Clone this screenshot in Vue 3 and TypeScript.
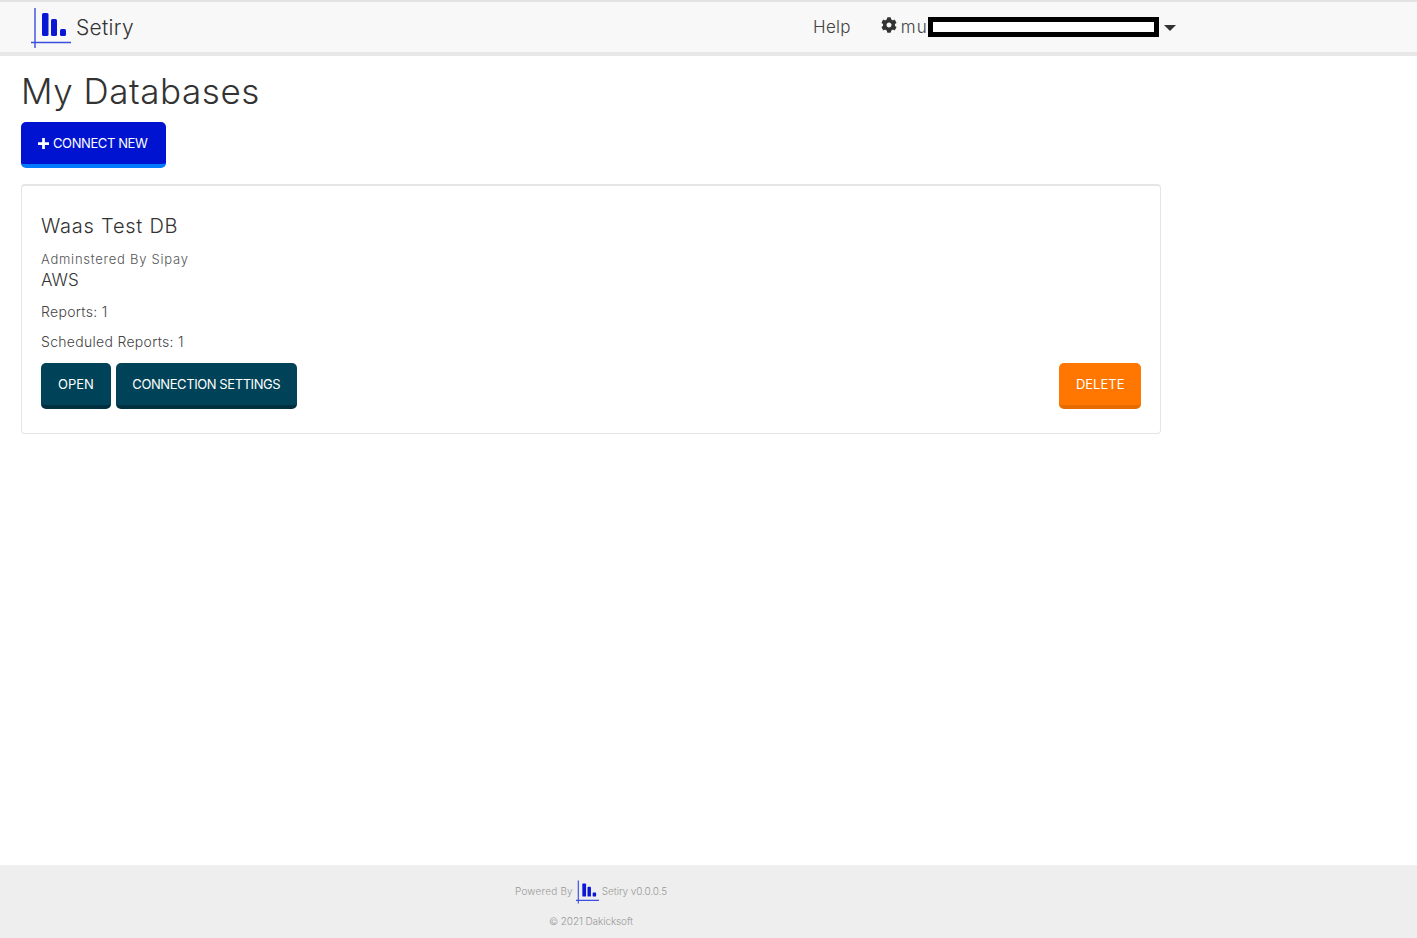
<template>
  <div class="page">
    <header class="navbar">
      <div class="brand">
        <svg class="logo" viewBox="0 0 40 40">
          <path d="M4 0v40M0 34.5h40" fill="none" stroke="#3a4fe0" stroke-width="1.4" />
          <rect x="11" y="5" width="6.5" height="23" rx="1.5" fill="#0a18d6" />
          <rect x="20" y="11" width="6" height="17" rx="1.5" fill="#0a18d6" />
          <rect x="29" y="21" width="6" height="7" rx="1.5" fill="#0a18d6" />
        </svg>
        <span class="brand-name">Setiry</span>
      </div>
      <a class="nav-link help">Help</a>
      <div class="user-menu">
        <svg class="gear" viewBox="0 0 512 512">
          <path
            d="M487.4 315.7l-42.6-24.6c4.3-23.2 4.3-47 0-70.2l42.6-24.6c4.9-2.8 7.1-8.6 5.5-14-11.1-35.6-30-67.8-54.7-94.6-3.8-4.1-10-5.1-14.8-2.3L380.8 110c-17.9-15.4-38.5-27.3-60.8-35.1V25.8c0-5.6-3.9-10.5-9.4-11.7-36.7-8.2-74.3-7.8-109.2 0-5.5 1.2-9.4 6.1-9.4 11.7V75c-22.2 7.9-42.8 19.8-60.8 35.1L88.7 85.5c-4.9-2.8-11-1.9-14.8 2.3-24.7 26.7-43.6 58.9-54.7 94.6-1.7 5.4.6 11.2 5.5 14L67.3 221c-4.3 23.2-4.3 47 0 70.2l-42.6 24.6c-4.9 2.8-7.1 8.6-5.5 14 11.1 35.6 30 67.8 54.7 94.6 3.8 4.1 10 5.1 14.8 2.3l42.6-24.6c17.9 15.4 38.5 27.3 60.8 35.1v49.2c0 5.6 3.9 10.5 9.4 11.7 36.7 8.2 74.3 7.8 109.2 0 5.5-1.2 9.4-6.1 9.4-11.7v-49.2c22.2-7.9 42.8-19.8 60.8-35.1l42.6 24.6c4.9 2.8 11 1.9 14.8-2.3 24.7-26.7 43.6-58.9 54.7-94.6 1.5-5.5-.7-11.3-5.6-14.1zM256 336c-44.1 0-80-35.9-80-80s35.9-80 80-80 80 35.9 80 80-35.9 80-80 80z"
          />
        </svg>
        <span class="nav-link user-name">mu</span>
        <span class="redacted"></span>
        <span class="caret"></span>
      </div>
    </header>

    <main class="content">
      <h1 class="title">My Databases</h1>
      <button class="btn btn-primary">
        <svg class="plus" viewBox="0 0 12 12"><path d="M4.5 0h3v4.5H12v3H7.5V12h-3V7.5H0v-3h4.5z" /></svg>
        CONNECT NEW
      </button>

      <section v-for="db in databases" :key="db.name" class="card">
        <h2 class="card-title">{{ db.name }}</h2>
        <div class="admin">Adminstered By {{ db.admin }}</div>
        <div class="provider">{{ db.provider }}</div>
        <p class="stat">Reports: {{ db.reports }}</p>
        <p class="stat">Scheduled Reports: {{ db.scheduled }}</p>
        <div class="actions">
          <button class="btn btn-dark btn-open">OPEN</button>
          <button class="btn btn-dark btn-settings">CONNECTION SETTINGS</button>
          <button class="btn btn-orange">DELETE</button>
        </div>
      </section>
    </main>

    <footer class="footer">
      <div class="powered">
        <span class="powered-by">Powered By</span>
        <svg class="logo-small" viewBox="0 0 40 40">
          <path d="M4 0v40M0 34.5h40" fill="none" stroke="#3a4fe0" stroke-width="2" />
          <rect x="11" y="5" width="6.5" height="23" rx="1.5" fill="#0a18d6" />
          <rect x="20" y="11" width="6" height="17" rx="1.5" fill="#0a18d6" />
          <rect x="29" y="21" width="6" height="7" rx="1.5" fill="#0a18d6" />
        </svg>
        <span class="version">Setiry v0.0.0.5</span>
      </div>
      <div class="copyright">© 2021 Dakicksoft</div>
    </footer>
  </div>
</template>

<script setup lang="ts">
const databases = [
  { name: 'Waas Test DB', admin: 'Sipay', provider: 'AWS', reports: 1, scheduled: 1 }
];
</script>

<style>
body {
  margin: 0;
  background: #fff;
}
</style>

<style scoped>
.page {
  display: flex;
  flex-direction: column;
  min-height: 938px;
  font-family: Inter, "Open Sans", sans-serif;
  font-weight: 300;
  color: #333;
}

.navbar {
  display: flex;
  align-items: center;
  box-sizing: border-box;
  height: 56px;
  padding-left: 31px;
  background: #f8f8f8;
  border-top: 2px solid #e2e2e2;
  border-bottom: 4px solid #e7e7e7;
}

.brand {
  display: flex;
  align-items: center;
  width: 782px;
}

.logo {
  width: 40px;
  height: 40px;
  margin: 1px 5px 0 0;
}

.brand-name {
  font-size: 21px;
  letter-spacing: 0.3px;
}

.nav-link {
  font-size: 17px;
  color: #444;
  letter-spacing: 0.3px;
}

.user-menu {
  display: flex;
  align-items: center;
  margin-left: 30px;
}

.gear {
  width: 16px;
  height: 16px;
  margin: -4px 4px 0 0;
  fill: #333;
}

.user-name {
  letter-spacing: 1px;
}

.redacted {
  box-sizing: border-box;
  width: 231px;
  height: 20px;
  margin-top: -1px;
  background: #fff;
  border: 5px solid #000;
}

.caret {
  width: 0;
  height: 0;
  margin: 2px 0 0 5px;
  border-top: 6px solid #333;
  border-left: 6px solid transparent;
  border-right: 6px solid transparent;
}

.content {
  flex: 1;
  width: 1140px;
  padding-left: 21px;
}

.title {
  margin: 13px 0 9px;
  font-size: 35px;
  line-height: 44px;
  font-weight: 300;
  letter-spacing: 0.55px;
}

.btn {
  box-sizing: border-box;
  height: 46px;
  padding: 0 17px;
  border: none;
  border-bottom: 4px solid;
  border-radius: 5px;
  font-family: inherit;
  font-size: 13px;
  font-weight: 400;
  color: #fff;
  cursor: pointer;
}

.btn-primary {
  display: flex;
  align-items: center;
  gap: 4px;
  padding-right: 19px;
  background: #0013d1;
  border-bottom-color: #007bff;
  letter-spacing: -0.4px;
}

.plus {
  width: 11px;
  height: 11px;
  fill: #fff;
}

.btn-dark {
  background: #004358;
  border-bottom-color: #00303f;
}

.btn-settings {
  padding: 0 16.5px;
  letter-spacing: -0.42px;
}

.btn-orange {
  margin-left: auto;
  padding: 0 16.5px;
  background: #ff7700;
  border-bottom-color: #e66b00;
}

.card {
  box-sizing: border-box;
  height: 250px;
  margin-top: 16px;
  padding: 27px 19px 0;
  border: 1px solid #e5e5e5;
  border-top-width: 2px;
  border-radius: 4px;
}

.card-title {
  margin: 0;
  font-size: 20px;
  line-height: 26px;
  font-weight: 300;
  letter-spacing: 0.75px;
}

.admin {
  margin-top: 11px;
  font-size: 13px;
  line-height: 19px;
  letter-spacing: 0.75px;
  color: #555;
}

.provider {
  margin: -1px 0 9px;
  font-size: 17px;
  line-height: 24px;
}

.stat {
  margin: 8px 0 0;
  font-size: 14px;
  line-height: 22px;
  letter-spacing: 0.3px;
  color: #444;
}

.actions {
  display: flex;
  gap: 5px;
  margin-top: 10px;
}

.footer {
  box-sizing: border-box;
  height: 73px;
  width: 100%;
  padding: 14px 235px 0 0;
  background: #eee;
  font-size: 10px;
  color: #999;
  text-align: center;
}

.powered {
  display: flex;
  justify-content: center;
  align-items: center;
  gap: 3px;
  height: 24px;
}

.powered-by {
  letter-spacing: 0.2px;
}

.version {
  letter-spacing: -0.1px;
}

.logo-small {
  width: 23px;
  height: 24px;
  margin-top: 2px;
}

.copyright {
  margin-top: 12px;
  letter-spacing: -0.1px;
}
</style>
